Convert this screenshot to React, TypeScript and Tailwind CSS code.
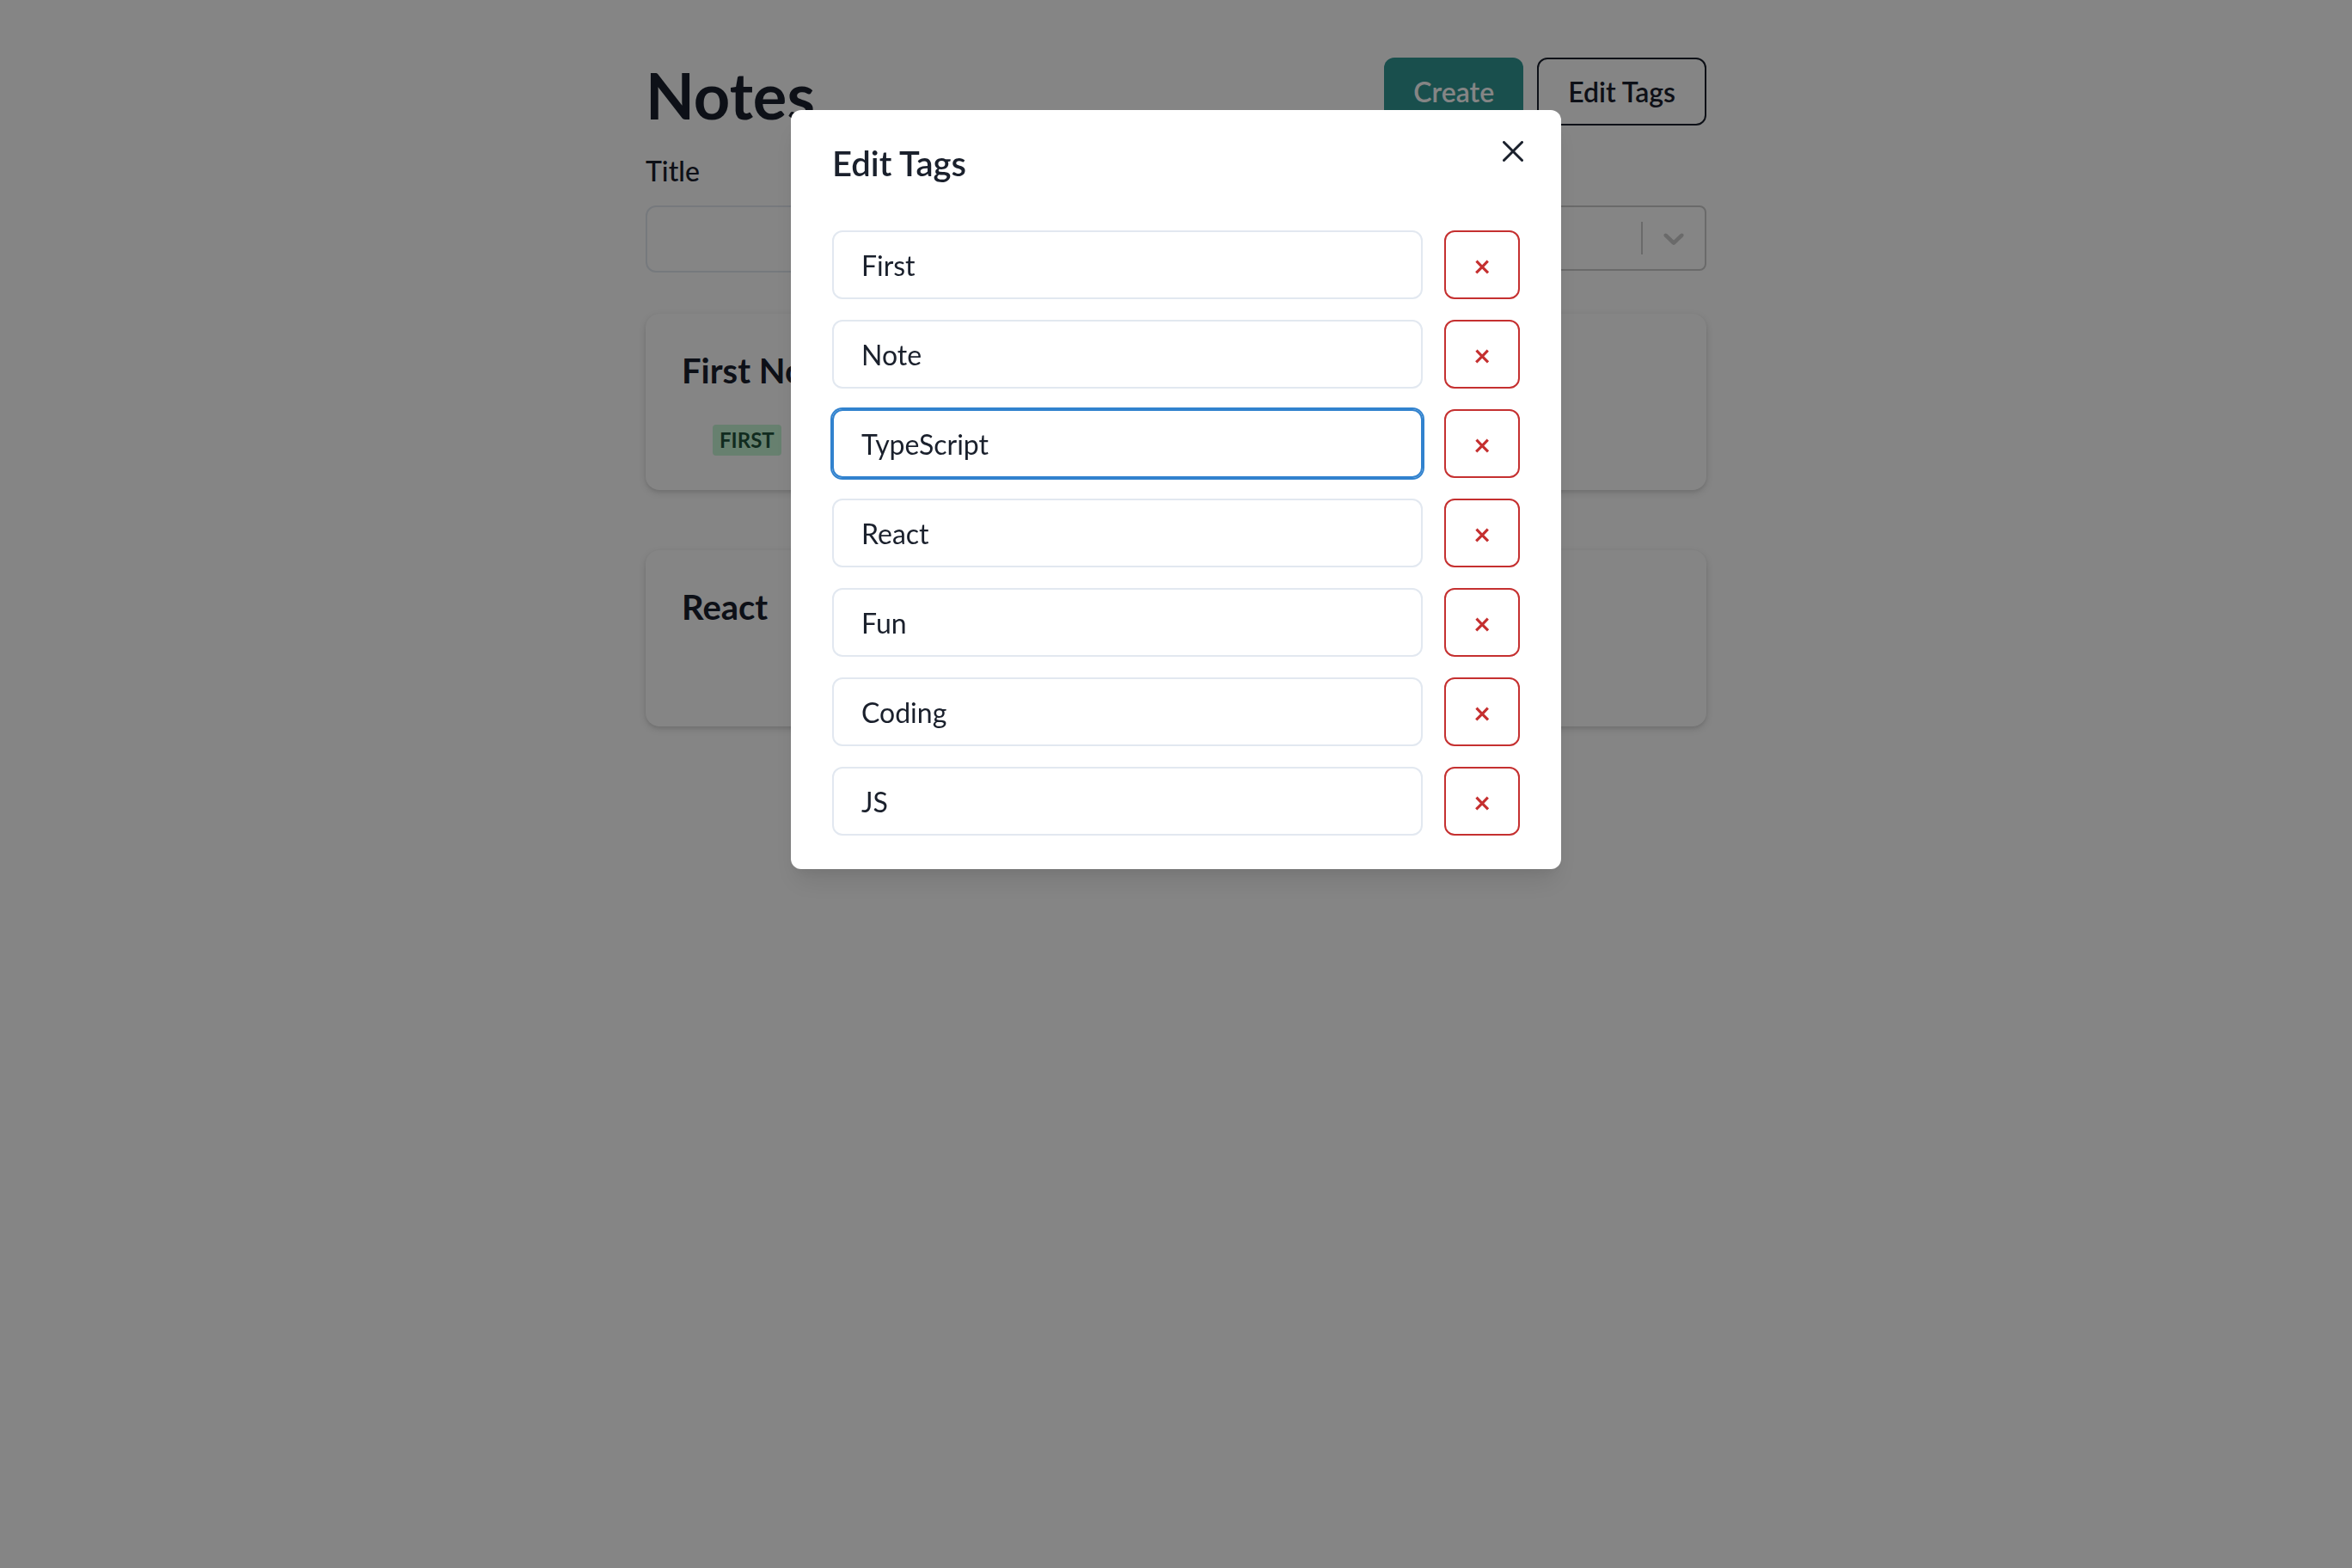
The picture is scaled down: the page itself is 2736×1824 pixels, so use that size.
import React, { useState } from "react";

const FONT = "font-['Segoe_UI',Lato,'Noto_Sans',sans-serif]";

const CloseIcon = () => (
  <svg viewBox="0 0 24 24" className="w-[24px] h-[24px]" fill="currentColor">
    <path d="M.439,21.44a1.5,1.5,0,0,0,2.122,2.121L11.823,14.3a.25.25,0,0,1,.354,0l9.262,9.263a1.5,1.5,0,1,0,2.122-2.121L14.3,12.177a.25.25,0,0,1,0-.354l9.263-9.262A1.5,1.5,0,0,0,21.439.44L12.177,9.7a.25.25,0,0,1-.354,0L2.561.44A1.5,1.5,0,0,0,.439,2.561L9.7,11.823a.25.25,0,0,1,0,.354Z" />
  </svg>
);

const Chevron = () => (
  <svg viewBox="0 0 20 20" className="w-[40px] h-[40px]" fill="#cccccc">
    <path d="M4.516 7.548c0.436-0.446 1.043-0.481 1.576 0l3.908 3.747 3.908-3.747c0.533-0.481 1.141-0.446 1.574 0 0.436 0.445 0.408 1.197 0 1.615-0.406 0.418-4.695 4.502-4.695 4.502-0.217 0.223-0.502 0.335-0.787 0.335s-0.57-0.112-0.789-0.335c0 0-4.287-4.084-4.695-4.502s-0.436-1.17 0-1.615z" />
  </svg>
);

interface Note {
  title: string;
  tags: string[];
}

const notes: Note[] = [
  { title: "First Note", tags: ["First"] },
  { title: "React", tags: [] },
];

const NoteCard = ({ note }: { note: Note }) => (
  <div className="h-[205px] rounded-[16px] bg-white shadow-[0_3px_8px_rgba(0,0,0,0.14),0_2px_4px_rgba(0,0,0,0.06)] px-[42px] pt-[42px]">
    <h3 className="text-[40px] leading-[1.2] font-bold text-[#1a202c]">{note.title}</h3>
    {note.tags.length > 0 && (
      <div className="flex gap-[16px] mt-[39px] ml-[36px]">
        {note.tags.map((tag) => (
          <span
            key={tag}
            className="px-[8px] h-[36px] flex items-center rounded-[4px] bg-[#c6f6d5] text-[#22543d] text-[24px] font-bold uppercase"
          >
            {tag}
          </span>
        ))}
      </div>
    )}
  </div>
);

export default function App() {
  const [tags, setTags] = useState<string[]>([
    "First",
    "Note",
    "TypeScript",
    "React",
    "Fun",
    "Coding",
    "JS",
  ]);

  return (
    <div className={`min-h-screen bg-white ${FONT} text-[#1a202c]`}>
      <div className="w-[1234px] mx-auto pt-[67px]">
        <div className="flex items-start justify-between mb-[19px]">
          <h1 className="text-[74px] leading-[1.2] font-bold">Notes</h1>
          <div className="flex gap-[16px]">
            <button className="h-[79px] px-[34px] rounded-[12px] bg-[#319795] text-white text-[32px] font-semibold">
              Create
            </button>
            <button className="h-[79px] px-[34px] rounded-[12px] border-[2px] border-[#1a202c] text-[32px] font-semibold">
              Edit Tags
            </button>
          </div>
        </div>

        <div className="grid grid-cols-2 gap-[32px] mb-[48px]">
          <div>
            <label className="block text-[32px] leading-[1.5] font-medium mb-[16px]">Title</label>
            <input className="w-full h-[78px] rounded-[12px] border-[2px] border-[#e2e8f0] px-[32px] text-[32px]" />
          </div>
          <div>
            <label className="block text-[32px] leading-[1.5] font-medium mb-[16px]">Tags</label>
            <div className="h-[76px] rounded-[8px] border-[2px] border-[#cccccc] flex items-center">
              <div className="flex-1" />
              <span className="w-[2px] h-[38px] bg-[#cccccc]" />
              <span className="px-[16px] flex items-center">
                <Chevron />
              </span>
            </div>
          </div>
        </div>

        <div className="flex flex-col gap-[70px]">
          {notes.map((n) => (
            <NoteCard key={n.title} note={n} />
          ))}
        </div>
      </div>

      {/* modal */}
      <div className="fixed inset-0 bg-[rgba(0,0,0,0.48)] flex justify-center items-start pt-[128px]">
        <div className="relative w-[896px] bg-white rounded-[12px] shadow-[0_20px_30px_-6px_rgba(0,0,0,0.1),0_8px_12px_-4px_rgba(0,0,0,0.05)]">
          <div className="px-[48px] py-[32px]">
            <h2 className="text-[40px] leading-[1.5] font-semibold">Edit Tags</h2>
          </div>
          <button className="absolute top-[16px] right-[24px] w-[64px] h-[64px] flex items-center justify-center text-[#1a202c]">
            <CloseIcon />
          </button>
          <div className="px-[48px] pt-[16px] pb-[39px] flex flex-col gap-[24px]">
            {tags.map((tag, i) => (
              <div key={i} className="flex gap-[25px]">
                <input
                  value={tag}
                  onChange={(e) => {
                    const next = [...tags];
                    next[i] = e.target.value;
                    setTags(next);
                  }}
                  className={
                    tag === "TypeScript"
                      ? "flex-1 h-[80px] rounded-[12px] border-[2px] border-[#3182ce] shadow-[0_0_0_2px_#3182ce] px-[32px] text-[32px] outline-none"
                      : "flex-1 h-[80px] rounded-[12px] border-[2px] border-[#e2e8f0] px-[32px] text-[32px] outline-none"
                  }
                />
                <button
                  onClick={() => setTags(tags.filter((_, j) => j !== i))}
                  className="w-[88px] h-[80px] rounded-[12px] border-[2px] border-[#c53030] text-[#c53030] text-[34px] font-bold flex items-center justify-center"
                >
                  ×
                </button>
              </div>
            ))}
          </div>
        </div>
      </div>
    </div>
  );
}
